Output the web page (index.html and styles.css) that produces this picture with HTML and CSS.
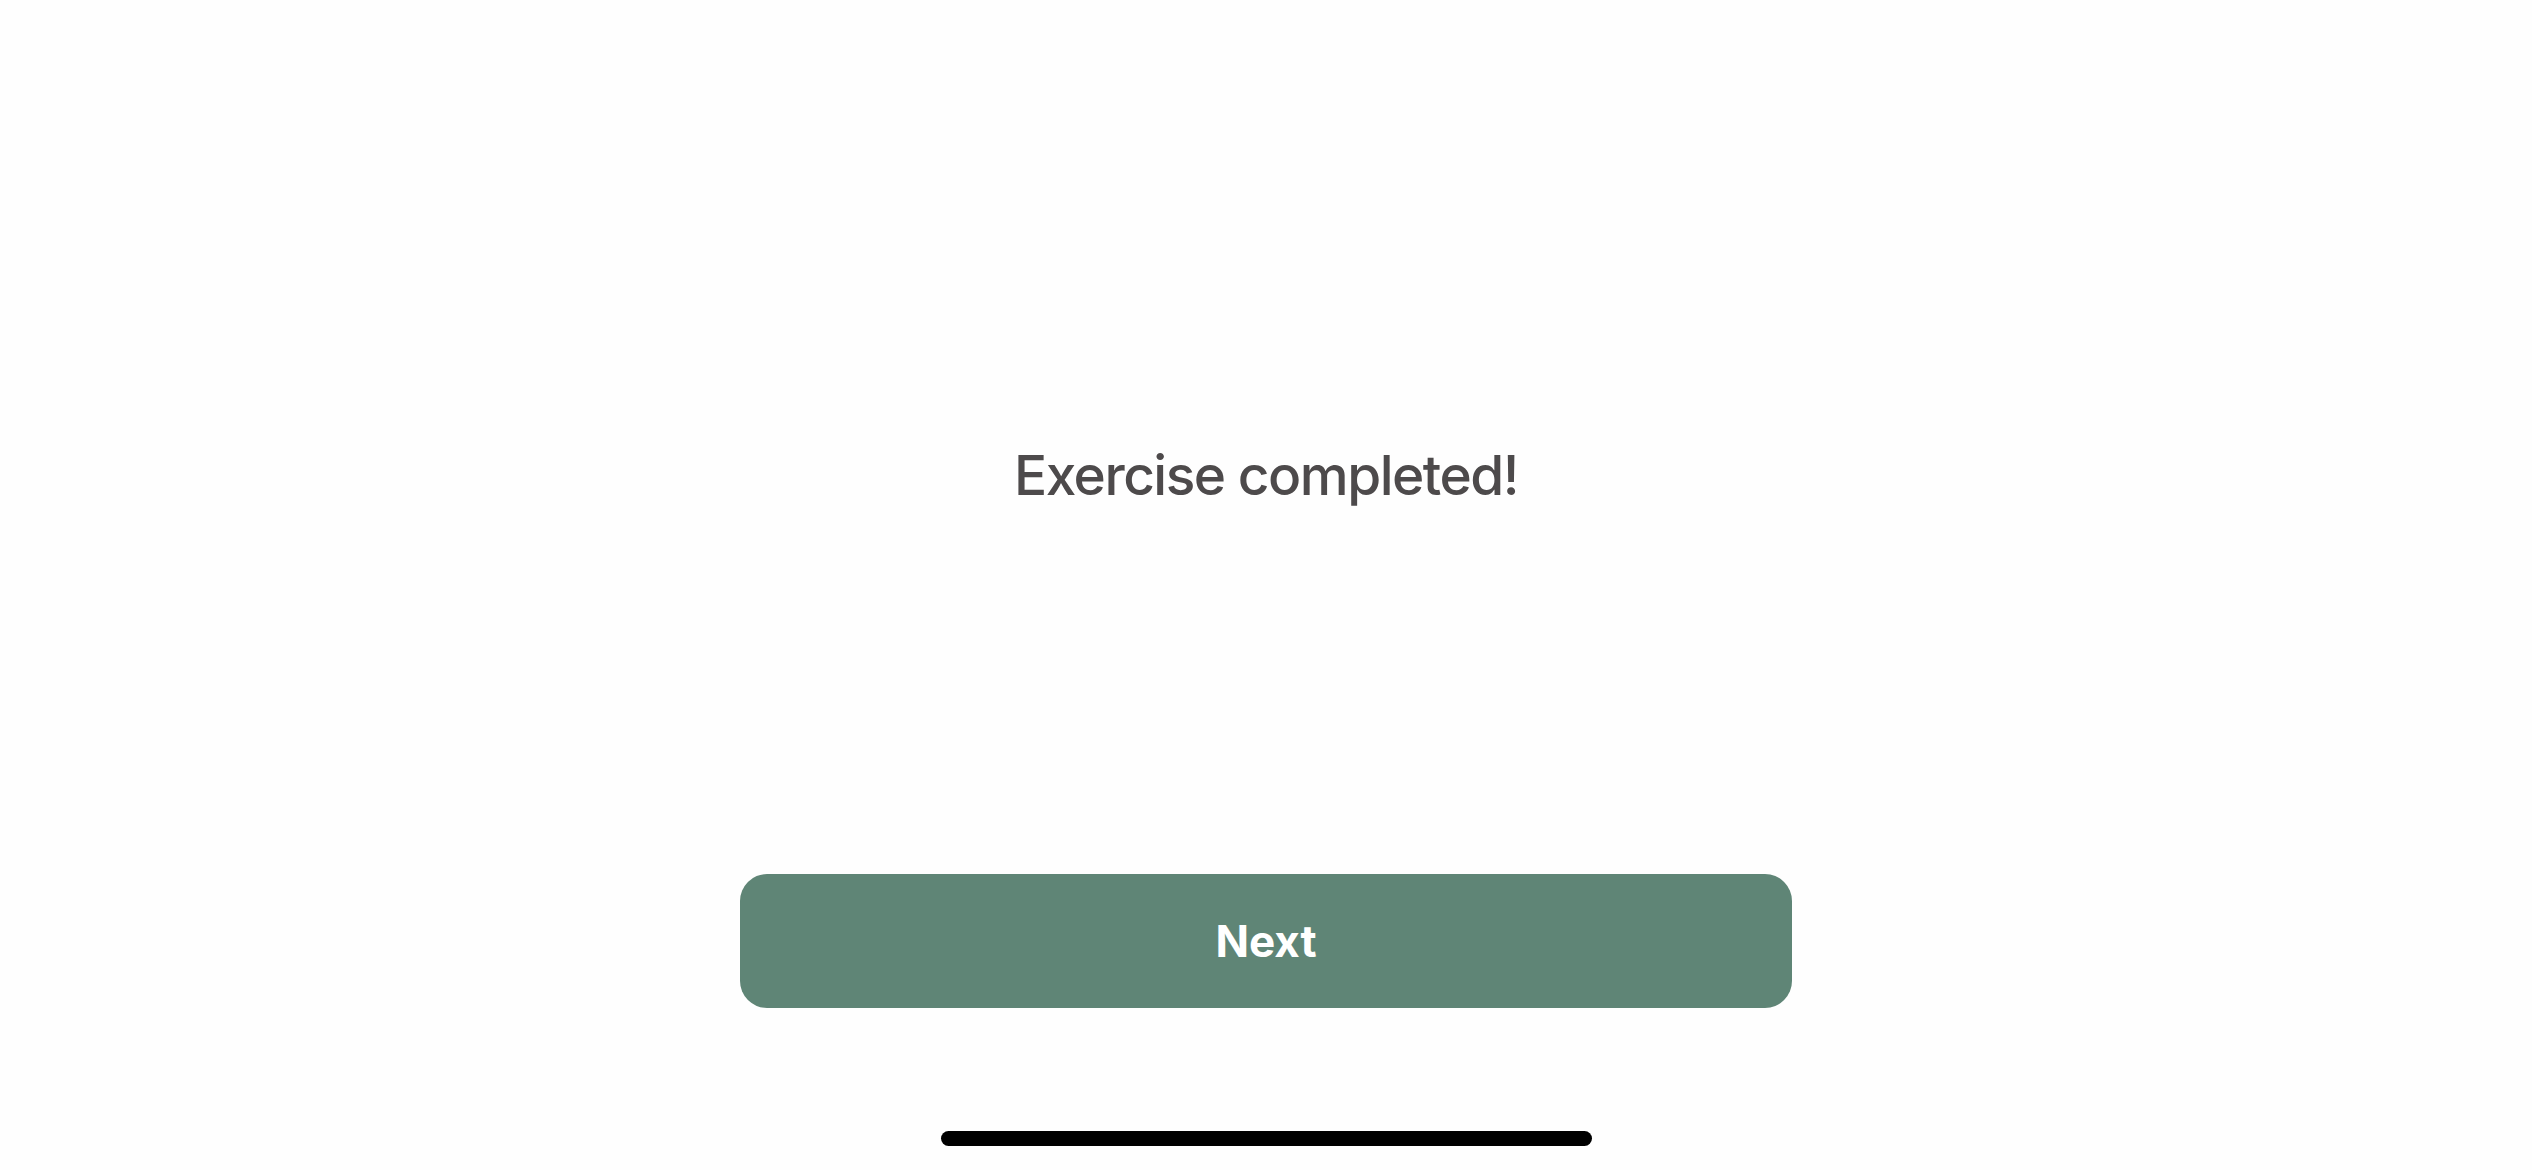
FILE: index.html
```html
<!DOCTYPE html>
<html lang="en">
<head>
<meta charset="utf-8">
<title>Exercise completed</title>
<link rel="stylesheet" href="styles.css">
</head>
<body>
<main class="screen">
  <h1 class="title">Exercise completed!</h1>
  <button class="next" type="button">Next</button>
  <div class="home-indicator"></div>
</main>
</body>
</html>
```

FILE: styles.css
```css
html, body {
  margin: 0;
  padding: 0;
  background: #fefefe;
}

.screen {
  width: 2532px;
  height: 1170px;
  display: flex;
  flex-direction: column;
  align-items: center;
  font-family: Inter, "Noto Sans", "Liberation Sans", sans-serif;
}

.title {
  margin: 440px 0 0;
  font-size: 55px;
  line-height: 70px;
  font-weight: 500;
  color: #4d4a4b;
  letter-spacing: -1.5px;
}

.next {
  margin-top: 364px;
  width: 1052px;
  height: 134px;
  border: 0;
  border-radius: 27px;
  background: #5f8576;
  color: #ffffff;
  font-family: Inter, "Noto Sans", "Liberation Sans", sans-serif;
  font-size: 44px;
  font-weight: 700;
  display: flex;
  align-items: center;
  justify-content: center;
  padding: 0;
}

.home-indicator {
  margin-top: 123px;
  width: 651px;
  height: 15px;
  border-radius: 8px;
  background: #000000;
}
```
